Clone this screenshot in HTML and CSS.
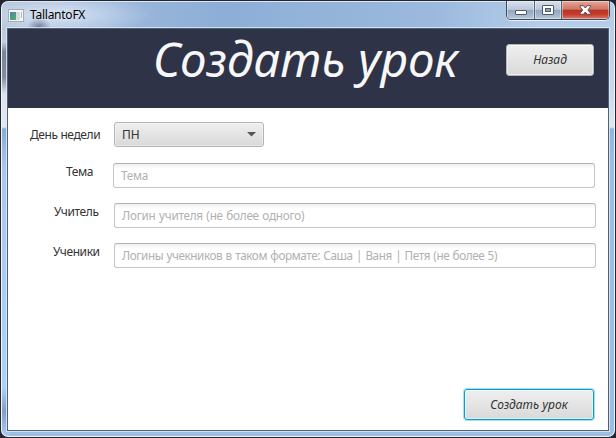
FILE: index.html
```html
<!DOCTYPE html>
<html lang="ru">
<head>
<meta charset="utf-8">
<title>TallantoFX</title>
<link rel="stylesheet" href="styles.css">
</head>
<body>
<div class="window">
  <div class="titlebar">
    <svg class="app-icon" width="16" height="14" viewBox="0 0 16 14">
      <defs><linearGradient id="pane" x1="0" y1="0" x2="1" y2="1"><stop offset="0" stop-color="#4c84aa"/><stop offset="1" stop-color="#54ad70"/></linearGradient></defs>
      <rect x=".5" y=".5" width="15" height="12" fill="#f4f5f5" stroke="#a9adb2"/>
      <rect x="2" y="3" width="6" height="8" fill="url(#pane)"/>
      <rect x="8" y="3" width="4" height="8" fill="#d9dcdf"/>
      <rect x="13" y="3" width="1" height="6" fill="#9acbaa"/>
    </svg>
    <span class="window-title">TallantoFX</span>
    <div class="controls">
      <div class="control minimize"><svg width="12" height="5"><rect x=".5" y=".5" width="11" height="4" rx=".5" fill="#fff" stroke="#50586a"/></svg></div>
      <div class="control maximize"><svg width="12" height="10"><rect x=".5" y=".5" width="11" height="9" rx=".5" fill="#fff" stroke="#50586a"/><rect x="3.5" y="3.5" width="5" height="3" fill="#8ba5c2" stroke="#50586a"/></svg></div>
      <div class="control close"><svg width="13" height="11" viewBox="0 0 13 11"><path d="M1 .7H4.5L6.3 3 8.1.7h3.5v1L8.9 5l2.7 3.3v1H8.1L6.3 7 4.5 9.3H1v-1L3.7 5 1 1.7z" fill="#fff" stroke="#5b4753"/></svg></div>
    </div>
  </div>
  <div class="client">
    <header class="header">
      <h1 class="heading">Создать урок</h1>
      <button class="button back">Назад</button>
    </header>
    <main class="form">
      <div class="row row-day"><label class="label day">День недели</label><div class="combo"><span>ПН</span><svg width="9" height="5"><path d="M0 0h9L4.5 4.5z" fill="#565656"/></svg></div></div>
      <div class="row row-topic"><label class="label topic">Тема</label><input class="field" placeholder="Тема"></div>
      <div class="row"><label class="label teacher">Учитель</label><input class="field" placeholder="Логин учителя (не более одного)"></div>
      <div class="row"><label class="label pupils">Ученики</label><input class="field long" placeholder="Логины учекников в таком формате: Саша | Ваня | Петя (не более 5)"></div>
      <button class="button create">Создать урок</button>
    </main>
  </div>
</div>
</body>
</html>
```

FILE: styles.css
```css
* { box-sizing: border-box; }
body {
  margin: 0;
  width: 616px;
  height: 438px;
  overflow: hidden;
  background: #23262e;
  font: 12px "Noto Sans", "Open Sans", sans-serif;
  color: #333;
}
.window {
  width: 614px;
  height: 436px;
  margin: 1px 0 0 1px;
  padding: 0 5px 5px 5px;
  border: 1px solid #edf6fc;
  border-top-color: #dce9f4;
  border-radius: 7px;
  background:
    radial-gradient(ellipse 12px 9px at 37px 25px, rgba(65, 79, 105, .6), transparent),
    radial-gradient(ellipse 95px 22px at 54px 13px, rgba(226, 236, 247, .85), rgba(226, 236, 247, 0)),
    linear-gradient(90deg, #aebfd8 0, #9fb9dc 100px, #8caed7 220px, #9bb9dd 430px, #b4cde9 540px, #b4cde9 100%) 0 0 / 100% 28px no-repeat,
    linear-gradient(#aebfd4 0, #c3cddd 40px, #7b8497 50px, #858c9e 75px, #dce2ef 92px, #e4e7f1 125px, #8baad0 127px, #a9c7ea 165px, #b0d1f4 385px, #829fc6 409px, #a6c5ea 430px) 0 0 / 8px 100% no-repeat,
    linear-gradient(#b4cde9 0, #c9d9ec 90px, #dfe6f1 125px, #94b4dc 127px, #9ebde3 160px) 100% 0 / 8px 100% no-repeat,
    #9ebde3;
}
.titlebar {
  display: flex;
  height: 26px;
}
.app-icon { margin: 7px 0 0 1px; }
.window-title {
  margin: 4px 0 0 6px;
  font-size: 12px;
  line-height: 17px;
  color: #000;
  letter-spacing: -.25px;
}
.controls {
  display: flex;
  width: 104px;
  height: 19px;
  margin: -1px -1px 0 auto;
  border: 1px solid #3d4a60;
  border-top: 0;
  border-radius: 0 0 5px 5px;
  overflow: hidden;
  box-shadow: 0 1px 0 rgba(240, 248, 255, .8);
}
.control {
  display: flex;
  align-items: center;
  justify-content: center;
  width: 28px;
  border-right: 1px solid #56657c;
  background: linear-gradient(#d9e2ed, #b9c6d8 48%, #92a4bb 50%, #b4c7dd);
  box-shadow: inset 0 0 0 1px rgba(255, 255, 255, .4);
}
.minimize { padding-top: 5px; }
.maximize { width: 27px; }
.close {
  width: 47px;
  border: 0;
  background: linear-gradient(#e5a797, #cf7666 46%, #b83422 50%, #c63d2c 75%, #da7c69);
}
.client {
  display: flex;
  flex-direction: column;
  width: 602px;
  height: 403px;
  border: 1px solid #52606f;
  outline: 1px solid rgba(218, 236, 248, .8);
  background: #fff;
}
.header {
  display: flex;
  height: 79px;
  background: #2e3347;
}
.heading {
  width: 350px;
  margin: -1px 0 0 145px;
  font-size: 47.5px;
  font-style: italic;
  font-weight: 400;
  line-height: 62px;
  letter-spacing: -.1px;
  white-space: nowrap;
  color: #f7f7f7;
}
.button {
  padding: 0;
  border: 1px solid #b4b4b4;
  border-radius: 3px;
  background: linear-gradient(#efefef, #d9d9d9);
  box-shadow: inset 0 0 0 1px rgba(255, 255, 255, .45);
  font: italic 12px "Noto Sans", "Open Sans", sans-serif;
  color: #333;
}
.back {
  width: 88px;
  height: 32px;
  margin: 15px 0 0 3px;
  padding-bottom: 2px;
}
.form {
  display: flex;
  flex-direction: column;
  flex: 1;
  padding-top: 14px;
}
.row {
  display: flex;
  height: 25px;
  margin-bottom: 15px;
}
.row-day { margin-bottom: 16px; }
.label {
  width: 106px;
  line-height: 17px;
  letter-spacing: -.4px;
  white-space: nowrap;
}
.day { padding: 4px 0 0 22px; }
.topic { width: 105px; padding-left: 58px; }
.teacher { padding-left: 46px; }
.pupils { padding-left: 45px; }
.combo {
  display: flex;
  align-items: center;
  justify-content: space-between;
  width: 150px;
  height: 25px;
  padding: 0 7px;
  border: 1px solid #b4b4b4;
  border-radius: 3px;
  background: linear-gradient(#efefef, #d9d9d9);
  box-shadow: inset 0 0 0 1px rgba(255, 255, 255, .4);
}
.field {
  width: 482px;
  height: 25px;
  padding: 0 7px 2px;
  border: 1px solid #c4c4c4;
  border-top-color: #b2b2b2;
  border-radius: 3px;
  background: linear-gradient(#f0f0f0, #fff 5px);
  font: 11.7px "Noto Sans", "Open Sans", sans-serif;
  letter-spacing: -.23px;
  word-spacing: .7px;
}
.long { letter-spacing: -.4px; }
.field::placeholder { color: #b0b0b0; opacity: 1; }
.create {
  width: 130px;
  height: 31px;
  margin: auto 14px 10px auto;
  border-color: #039ed3;
  box-shadow: 0 0 0 1px #a9deef, inset 0 0 0 1px rgba(255, 255, 255, .45);
}
```
